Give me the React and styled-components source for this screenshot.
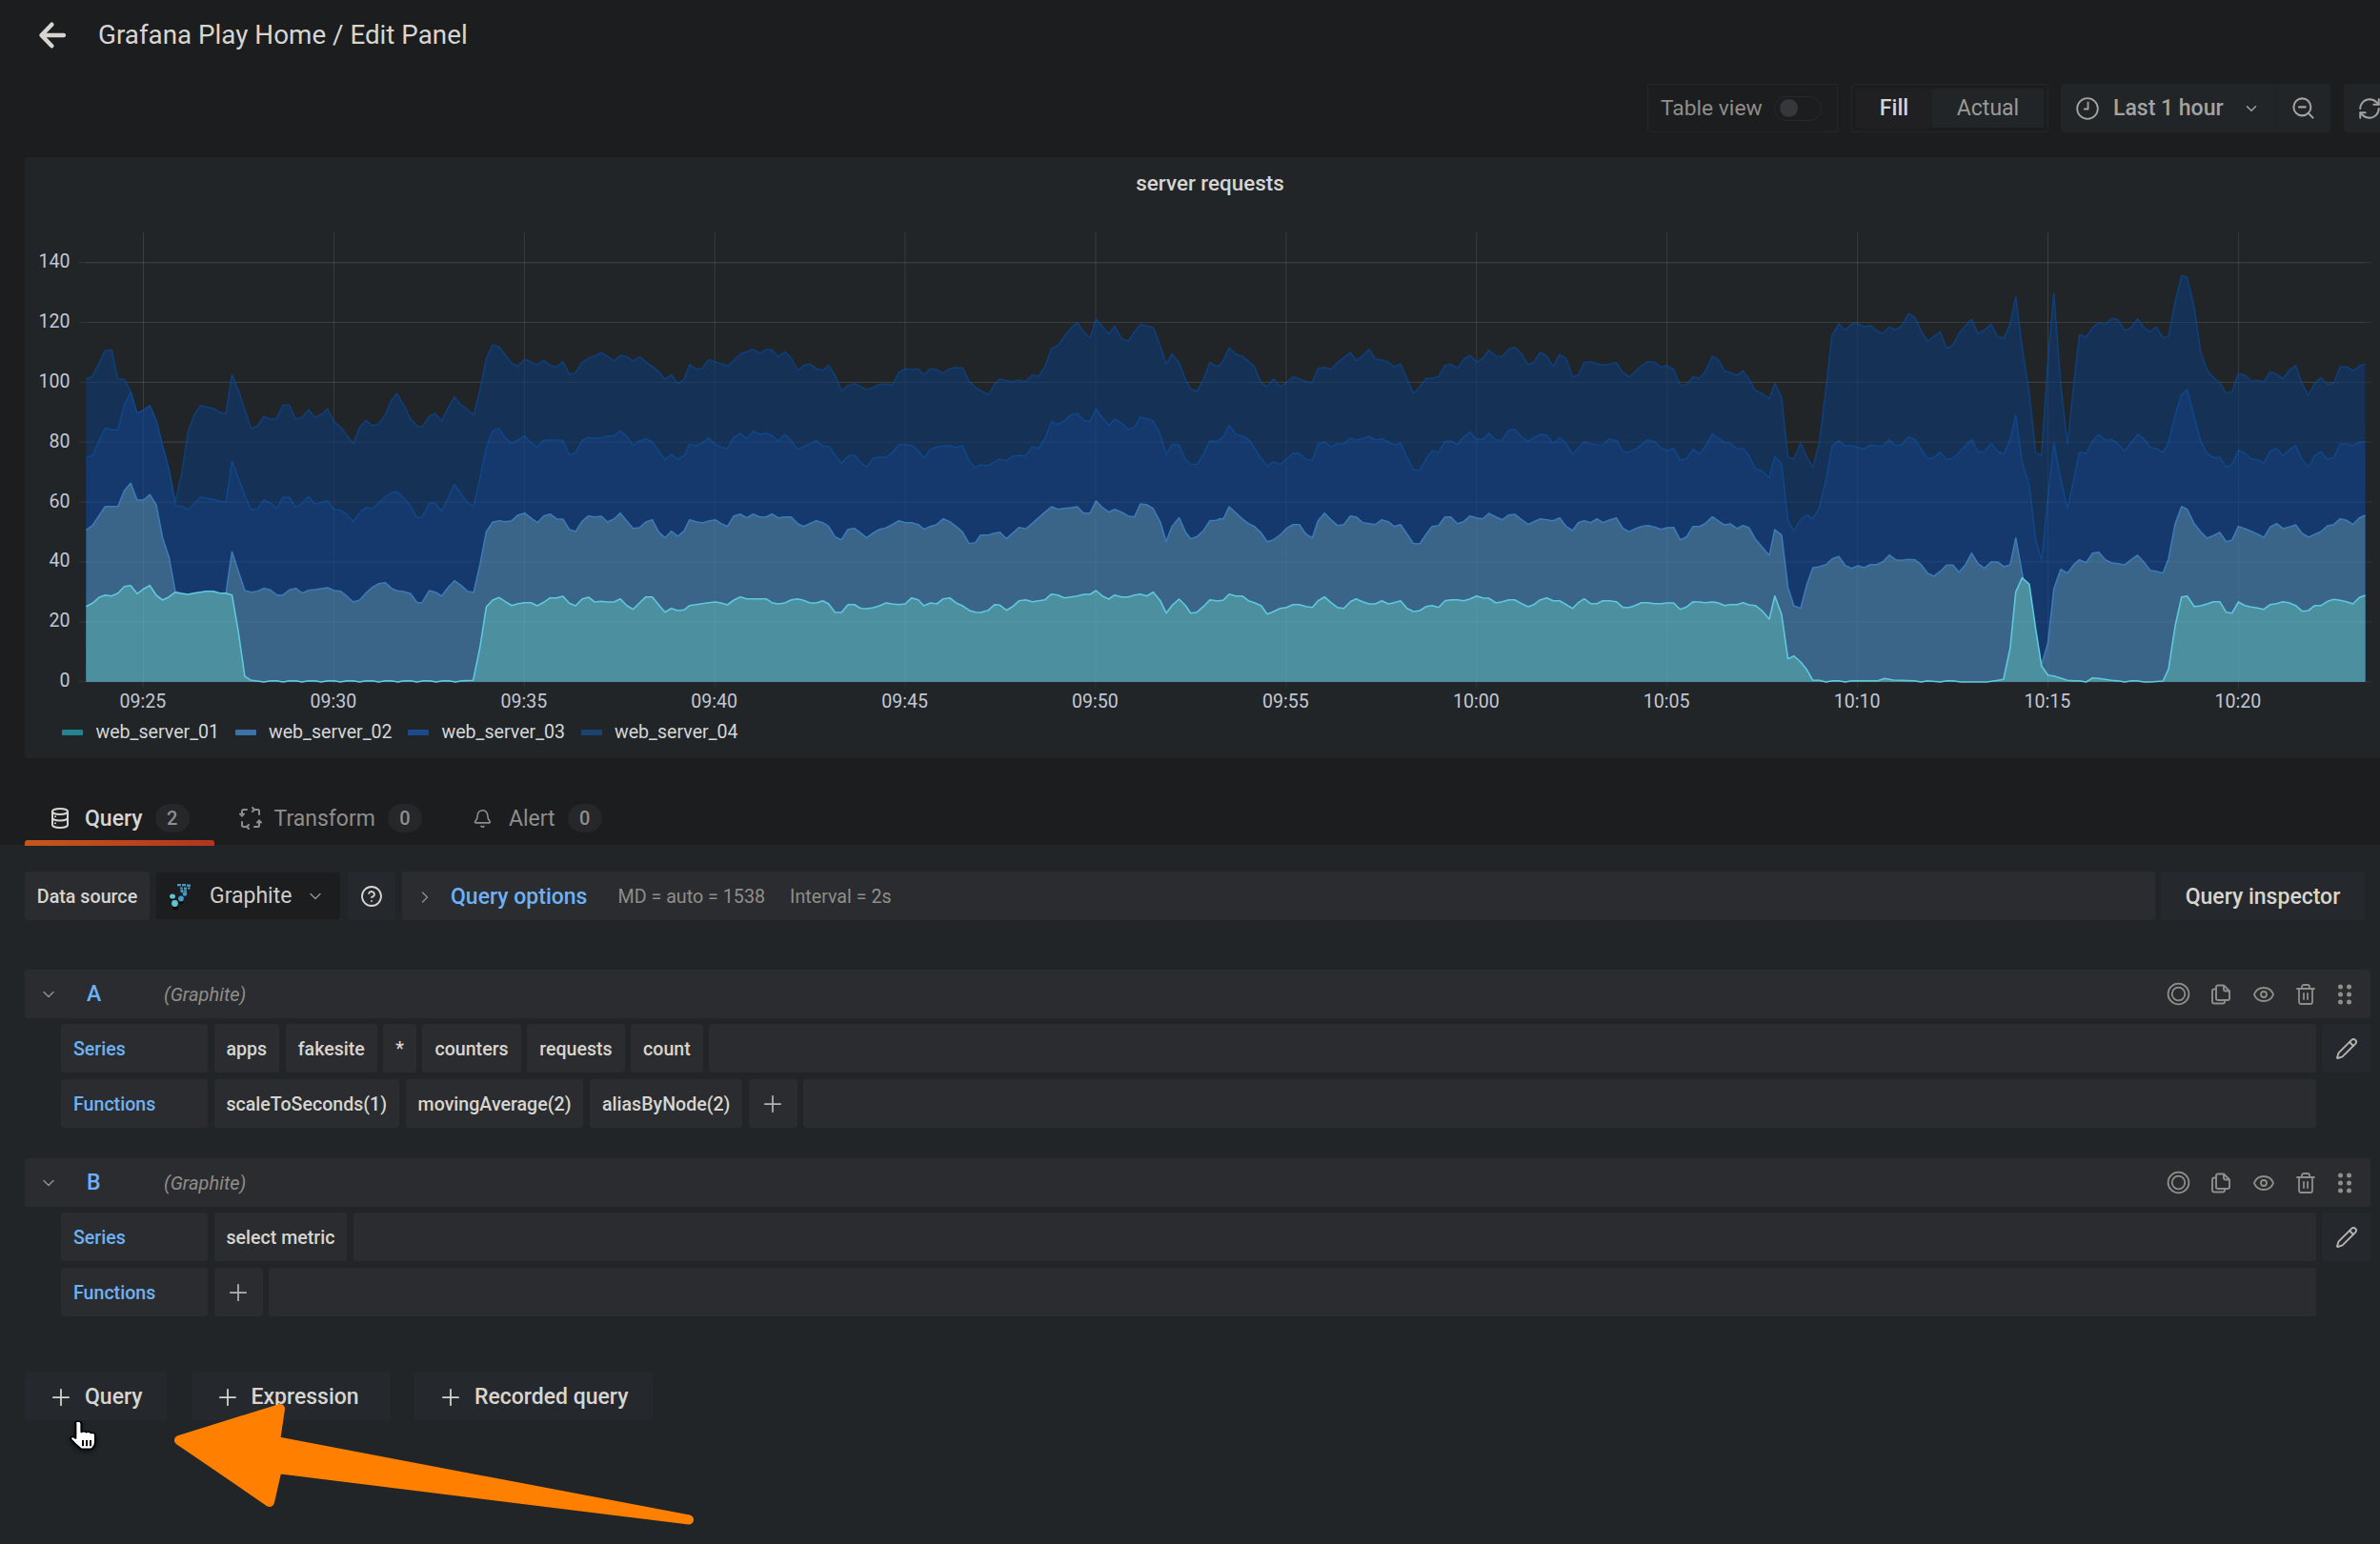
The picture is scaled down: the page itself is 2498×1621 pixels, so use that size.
import React from "react";
import styled, { createGlobalStyle } from "styled-components";
import { ChevronDown, ChevronRight, Plus, Pencil, Eye, Trash2, Bell, ZoomOut, RefreshCw, CircleHelp } from "lucide-react";

const Global = createGlobalStyle`
  html, body { margin: 0; padding: 0; background: #1c1d1f; }
  body { font-family: Roboto, "Liberation Sans", sans-serif; }
  * { box-sizing: border-box; }
`;

/* ---------- chart data: traced top edges of the four stacked series ---------- */
const trace = (ox, sx, oy, pts) =>
  pts.trim().split(/\s+/).map((p) => {
    const [a, b] = p.split(",").map(Number);
    return [ox + a / sx, oy + b / 3];
  });
const line = (a, b, c, d) => [
  ...trace(60, 2.24, 230, a),
  ...trace(750, 2.958, 250, b).slice(1),
  ...trace(1280, 2.958, 250, c).slice(1),
  ...trace(1800, 2.246, 230, d),
];

const s4 = line(
  "68,505 83,495 98,455 113,415 128,412 143,505 158,505 173,545 188,612 203,602 218,588 233,635 248,715 263,790 278,890 293,800 308,670 322,617 337,587 352,592 367,596 382,608 397,613 411,490 426,540 441,600 456,660 471,652 486,622 501,631 516,628 531,586 546,586 561,631 576,624 591,601 606,625 621,616 636,598 651,639 666,655 681,680 696,707 711,656 726,634 741,651 756,646 771,618 786,570 799,550 816,590 831,630 846,652 858,655 875,622 889,613 904,636 919,595 934,560 949,585 964,600 979,617 994,540 1009,440 1024,397 1039,402 1054,428 1069,455 1084,463 1099,442 1114,451 1129,459 1144,445 1159,461 1174,466 1189,449 1204,490 1219,484 1234,452 1249,439 1264,431 1279,421 1294,433 1309,447 1324,430 1339,433 1354,448 1369,434 1384,450 1399,465 1414,480 1429,505 1444,490 1459,520 1474,505 1487,458 1502,473 1517,470 1532,443 1547,450",
  "0,391 20,395 40,403 60,385 80,365 100,358 120,350 140,363 160,352 178,352 198,374 218,358 238,378 258,417 276,401 296,397 316,411 336,417 354,400 374,432 394,481 414,464 434,458 454,468 472,478 492,470 512,461 532,460 552,463 572,423 592,412 612,414 632,412 650,431 670,411 690,415 710,426 730,412 750,407 770,409 790,452 810,470 830,483 850,493 870,460 886,443 906,449 926,452 946,447 966,452 986,431 1006,435 1026,405 1046,348 1066,338 1086,310 1106,284 1126,266 1146,296 1166,315 1184,255 1204,278 1224,303 1242,277 1264,317 1284,325 1304,295 1322,272 1342,277 1362,282 1384,340 1402,397 1420,365 1442,392 1462,445 1478,475 1498,483 1518,445 1538,392 1558,404 1568,400",
  "0,397 12,385 30,345 50,365 70,371 90,388 108,404 130,457 148,468 168,443 188,468 208,456 228,436 248,443 268,452 288,454 306,411 326,407 346,413 366,392 386,376 406,361 424,385 444,371 464,350 484,381 504,384 524,391 542,406 562,397 582,443 602,489 622,468 642,442 660,442 680,436 700,401 718,397 738,410 758,382 778,370 798,391 818,379 836,353 858,372 878,373 898,350 916,344 938,365 958,399 976,391 996,359 1016,372 1036,404 1056,367 1076,380 1096,437 1114,431 1132,392 1152,389 1172,396 1190,400 1210,397 1232,392 1252,423 1272,438 1290,421 1310,402 1330,389 1350,391 1370,406 1390,402 1410,414 1430,463 1450,462 1470,437 1490,442 1508,421 1530,372",
  "0,438 10,447 22,478 36,483 52,492 66,478 80,503 95,541 112,550 128,566 141,518 157,562 172,750 186,755 202,705 217,750 231,782 246,705 262,530 276,367 292,330 307,350 322,330 337,330 352,340 366,335 381,352 396,360 411,340 426,349 441,337 456,298 471,310 486,352 501,385 516,370 531,356 546,407 561,398 575,360 590,337 605,316 620,361 635,350 651,331 666,370 681,375 696,330 709,245 724,405 741,550 756,735 770,745 785,450 799,233 815,520 831,710 846,520 859,364 875,372 890,342 905,326 920,333 935,313 950,317 966,352 981,342 996,314 1011,342 1026,355 1040,340 1056,374 1069,369 1085,260 1100,178 1113,184 1130,280 1145,420 1160,475 1175,500 1190,515 1205,548 1219,544 1234,487 1249,491 1264,511 1279,508 1294,513 1309,481 1324,489 1339,504 1354,476 1369,461 1384,520 1399,555 1414,516 1429,500 1444,521 1459,516 1474,466 1489,466 1504,478 1519,463 1533,457"
);
const s3 = line(
  "68,750 83,745 98,700 113,658 128,664 143,664 158,585 173,545 188,612 203,602 218,588 233,635 248,715 263,790 278,902 293,905 308,915 322,897 337,875 352,880 367,883 382,888 397,892 411,763 426,815 441,870 456,916 471,913 486,884 501,894 516,912 531,876 546,877 561,908 576,895 591,874 606,898 621,893 636,887 651,916 666,916 681,930 696,953 711,925 726,908 741,912 756,895 771,875 786,862 799,859 816,880 831,905 846,941 858,939 875,895 889,895 904,920 919,880 934,836 949,865 964,893 979,905 994,820 1009,720 1024,667 1039,660 1054,690 1069,707 1084,695 1099,683 1114,705 1129,718 1144,697 1159,695 1174,697 1189,697 1204,743 1219,735 1234,698 1249,688 1264,691 1279,689 1294,683 1309,683 1324,668 1339,684 1354,713 1369,699 1384,692 1399,702 1414,730 1429,758 1444,741 1459,757 1474,746 1487,709 1502,714 1517,706 1532,689 1547,710",
  "0,650 20,658 40,664 60,627 80,615 100,632 120,608 140,618 160,615 178,621 198,640 218,618 238,638 258,665 276,658 296,648 316,638 336,656 354,656 374,683 394,710 414,686 434,683 454,708 472,721 492,694 512,689 532,691 552,675 572,650 592,650 612,653 632,669 650,694 670,665 690,658 710,655 730,654 750,659 770,654 790,700 810,724 826,714 850,716 870,705 886,696 906,701 926,687 946,684 966,686 986,657 1006,662 1026,630 1046,578 1066,587 1086,576 1106,556 1126,553 1146,574 1166,578 1184,538 1204,566 1224,590 1242,570 1264,583 1284,603 1304,596 1322,564 1342,569 1362,576 1384,620 1402,683 1420,650 1442,651 1462,698 1478,712 1498,713 1518,680 1538,638 1558,641 1568,635",
  "0,637 12,625 30,590 50,617 70,623 90,634 108,660 130,695 148,718 168,704 188,713 208,696 228,677 248,678 268,697 288,700 306,648 326,642 346,658 366,648 386,647 406,630 424,635 444,632 464,624 484,636 504,632 524,642 542,652 562,646 582,690 602,730 622,731 642,695 660,670 680,675 700,642 718,639 738,651 758,626 778,612 798,634 818,634 836,614 858,637 878,635 898,605 916,602 938,626 958,640 976,629 996,618 1016,620 1036,647 1056,629 1076,647 1096,681 1114,661 1132,642 1152,647 1172,652 1190,651 1210,632 1232,638 1252,672 1272,674 1290,666 1310,651 1330,635 1350,641 1370,660 1390,670 1410,662 1430,700 1450,695 1470,665 1490,680 1508,656 1530,617",
  "0,683 10,692 22,704 36,706 52,725 66,722 80,745 95,786 112,794 128,815 141,748 157,770 172,950 186,982 202,947 217,932 231,943 246,910 262,820 276,716 292,698 307,715 322,713 337,720 352,724 366,712 381,715 396,714 411,696 426,714 441,710 456,686 471,694 486,725 501,755 516,751 531,734 546,758 561,753 575,736 590,714 605,694 620,734 635,731 651,707 666,731 681,740 696,695 709,618 724,765 741,840 756,1010 770,1075 785,880 799,705 815,820 831,912 846,820 859,734 875,738 890,700 905,678 920,697 935,694 950,708 966,730 981,704 996,678 1011,692 1026,719 1040,723 1056,736 1069,705 1085,615 1100,553 1113,537 1130,625 1145,700 1160,738 1175,751 1190,751 1205,781 1219,773 1234,728 1249,738 1264,755 1279,758 1294,769 1309,731 1324,722 1339,745 1354,728 1369,713 1384,758 1399,781 1414,745 1429,733 1444,758 1459,750 1474,708 1489,708 1504,714 1519,703 1533,702"
);
const s2 = line(
  "68,980 83,965 98,935 113,905 128,905 143,905 158,855 173,832 188,885 203,885 218,868 233,900 248,1005 263,1065 278,1175 293,1178 308,1182 322,1178 337,1175 352,1172 367,1172 382,1178 397,1178 411,1048 426,1110 441,1170 456,1175 471,1172 486,1163 501,1168 516,1184 531,1184 546,1168 561,1163 576,1178 591,1169 606,1167 621,1164 636,1161 651,1170 666,1172 681,1188 696,1206 711,1200 726,1178 741,1160 756,1148 771,1145 786,1163 799,1171 816,1174 831,1180 846,1208 858,1208 875,1170 889,1175 904,1187 919,1160 934,1139 949,1153 964,1172 979,1176 994,1090 1009,985 1024,955 1039,950 1054,953 1069,950 1084,932 1099,926 1114,942 1129,956 1144,935 1159,929 1174,944 1189,945 1204,978 1219,984 1234,952 1249,935 1264,938 1279,936 1294,954 1309,945 1324,926 1339,951 1354,974 1369,972 1384,954 1399,947 1414,985 1429,1004 1444,983 1459,999 1474,982 1487,947 1502,953 1517,957 1532,951 1547,947",
  "0,887 20,899 40,908 60,875 80,869 100,881 120,869 140,878 160,878 178,869 198,881 218,878 238,878 258,899 276,908 296,899 316,890 336,896 354,908 374,941 394,950 414,917 434,914 454,929 472,944 492,929 512,917 532,913 552,902 572,890 592,896 612,896 632,902 650,917 670,908 690,902 710,884 730,893 750,908 770,926 790,962 810,959 826,935 850,935 870,929 886,926 906,947 926,929 946,911 966,916 986,899 1006,881 1026,863 1046,846 1066,854 1086,851 1106,849 1126,846 1146,866 1166,866 1184,828 1204,848 1224,863 1242,854 1264,863 1284,875 1304,878 1322,837 1342,840 1362,852 1384,895 1402,956 1420,908 1442,881 1462,926 1478,947 1498,940 1518,921 1538,890 1558,889 1568,884",
  "0,887 12,884 30,846 50,865 70,884 90,899 108,908 130,929 148,956 168,950 188,935 208,914 228,902 248,902 268,932 288,944 306,890 326,866 346,887 366,905 386,902 406,875 424,878 444,896 464,899 484,902 504,887 524,893 542,908 562,902 582,932 602,962 622,962 642,932 660,908 680,905 700,878 718,878 738,899 758,893 778,875 798,881 818,884 836,867 858,878 878,887 898,872 916,870 938,887 958,902 976,893 996,884 1016,887 1036,890 1056,881 1076,908 1096,921 1114,896 1132,890 1152,896 1172,884 1190,896 1210,888 1232,881 1252,914 1272,925 1290,916 1310,908 1330,905 1350,910 1370,917 1390,912 1410,911 1430,950 1450,941 1470,908 1490,908 1508,899 1530,878",
  "0,943 10,953 22,963 36,960 52,975 66,965 80,972 95,1008 112,1034 128,1060 141,978 157,995 172,1160 186,1218 202,1226 217,1150 231,1098 246,1095 262,1088 276,1070 292,1063 307,1091 322,1100 337,1092 352,1098 366,1088 381,1088 396,1079 411,1058 426,1073 441,1075 456,1072 471,1073 486,1088 501,1115 516,1125 531,1110 546,1090 561,1090 575,1112 590,1090 605,1052 620,1085 635,1100 651,1080 666,1080 681,1095 696,1089 709,1005 724,1115 741,1245 756,1330 770,1405 785,1335 799,1165 815,1103 831,1115 846,1088 859,1073 875,1082 890,1052 905,1049 920,1073 935,1083 950,1085 966,1089 981,1073 996,1059 1011,1080 1026,1106 1040,1109 1056,1115 1069,1070 1085,960 1100,905 1113,914 1130,960 1145,985 1160,1005 1175,997 1190,987 1205,1016 1219,1011 1234,968 1249,975 1264,983 1279,992 1294,1003 1309,970 1324,959 1339,975 1354,970 1369,963 1384,990 1399,1002 1414,993 1429,984 1444,966 1459,962 1474,944 1489,949 1504,962 1519,941 1533,933"
);
const s1 = line(
  "68,1220 83,1210 98,1192 113,1184 128,1187 143,1178 158,1157 173,1154 188,1180 203,1165 218,1154 233,1185 248,1200 263,1190 278,1175 293,1180 308,1182 322,1178 337,1175 352,1172 367,1172 382,1178 397,1178 411,1184 426,1300 441,1440 456,1453 471,1455 486,1458 501,1454 516,1454 531,1458 546,1454 561,1454 576,1458 591,1454 606,1454 621,1458 636,1454 651,1454 666,1458 681,1454 696,1454 711,1458 726,1454 741,1454 756,1458 771,1454 786,1454 801,1458 816,1454 831,1454 846,1458 861,1454 876,1454 891,1458 906,1454 921,1454 936,1458 951,1454 978,1453 994,1350 1009,1222 1024,1200 1039,1192 1054,1205 1069,1217 1084,1211 1099,1208 1114,1208 1129,1218 1144,1207 1159,1193 1174,1193 1189,1188 1204,1210 1219,1218 1234,1197 1249,1191 1264,1206 1279,1204 1294,1206 1309,1206 1324,1196 1339,1217 1354,1229 1369,1209 1384,1190 1399,1190 1414,1214 1429,1238 1444,1226 1459,1233 1474,1231 1487,1217 1502,1214 1517,1211 1532,1208 1547,1206",
  "0,1145 20,1149 40,1155 60,1140 80,1130 100,1136 120,1136 140,1136 160,1136 178,1148 198,1152 218,1149 238,1139 258,1136 276,1141 296,1149 316,1149 336,1142 354,1152 374,1178 394,1179 414,1154 434,1154 454,1166 472,1167 492,1164 512,1158 532,1149 552,1152 572,1154 592,1152 612,1133 632,1139 650,1158 670,1149 690,1152 710,1136 730,1133 750,1149 770,1158 790,1172 810,1178 826,1179 850,1172 870,1154 886,1156 906,1172 926,1160 946,1142 966,1139 986,1145 1006,1142 1026,1139 1046,1121 1066,1124 1086,1133 1106,1130 1126,1127 1146,1122 1166,1122 1184,1110 1204,1127 1224,1137 1242,1124 1264,1130 1284,1130 1304,1124 1322,1121 1342,1127 1362,1115 1384,1142 1402,1181 1420,1157 1442,1137 1462,1157 1478,1181 1498,1178 1518,1160 1538,1139 1558,1142 1568,1142",
  "0,1140 12,1140 30,1121 50,1127 70,1127 90,1142 108,1148 130,1158 148,1184 168,1176 188,1166 208,1163 228,1154 248,1154 268,1160 288,1163 306,1142 326,1130 346,1148 366,1163 386,1166 406,1145 424,1136 444,1145 464,1152 484,1152 504,1142 524,1152 542,1148 562,1142 582,1166 602,1176 622,1173 642,1160 660,1157 680,1163 700,1142 718,1139 738,1139 758,1142 778,1136 798,1127 818,1133 836,1134 858,1149 878,1145 898,1139 916,1139 938,1151 958,1161 976,1154 996,1139 1016,1133 1036,1142 1056,1142 1076,1154 1096,1166 1114,1148 1132,1136 1152,1151 1172,1151 1190,1142 1210,1142 1232,1145 1252,1163 1272,1163 1290,1157 1310,1148 1330,1148 1350,1151 1370,1151 1390,1149 1410,1149 1430,1169 1450,1162 1470,1145 1490,1146 1508,1148 1530,1146",
  "0,1207 10,1210 22,1217 36,1214 52,1214 66,1208 80,1215 95,1217 112,1235 128,1260 141,1187 157,1245 172,1385 186,1376 202,1395 217,1420 231,1453 246,1453 262,1458 276,1454 292,1454 307,1458 322,1454 340,1454 384,1454 400,1447 420,1452 470,1454 486,1458 501,1454 531,1458 546,1454 561,1454 580,1458 640,1458 660,1454 680,1450 696,1350 709,1175 724,1130 741,1150 756,1290 770,1408 785,1436 799,1439 815,1446 831,1453 846,1454 859,1454 875,1458 890,1445 905,1447 935,1453 950,1454 966,1458 981,1454 996,1454 1011,1458 1026,1458 1056,1455 1069,1418 1085,1280 1100,1190 1113,1187 1130,1220 1145,1218 1160,1212 1175,1205 1190,1205 1205,1238 1219,1241 1234,1206 1249,1217 1264,1222 1279,1225 1294,1229 1309,1214 1324,1211 1339,1205 1354,1209 1369,1217 1384,1235 1399,1233 1414,1217 1429,1217 1444,1204 1459,1198 1474,1201 1489,1205 1504,1212 1519,1192 1533,1185"
);

const BASE = 715.7;
const STEP = 62.87;
const CHART_SERIES = [
  { pts: s4, fill: "#153155", stroke: "#0f3f7a" },
  { pts: s3, fill: "#15396c", stroke: "#0f4788" },
  { pts: s2, fill: "#3a6488", stroke: "#3d7ab8" },
  { pts: s1, fill: "#4c909f", stroke: "#5fc8de" },
];
const TICKS_X = ["09:25", "09:30", "09:35", "09:40", "09:45", "09:50", "09:55", "10:00", "10:05", "10:10", "10:15", "10:20"];
const TICKS_Y = [0, 20, 40, 60, 80, 100, 120, 140];
const LEGEND = [
  { name: "web_server_01", color: "#23838f" },
  { name: "web_server_02", color: "#3c72a8" },
  { name: "web_server_03", color: "#1d4a8e" },
  { name: "web_server_04", color: "#1c4270" },
];

const toStr = (pts) => pts.map(([x, y]) => `${x.toFixed(1)},${y.toFixed(1)}`).join(" ");

const Chart = () => (
  <ChartSvg viewBox="26 244 2472 506" width="2472" height="506">
    {TICKS_X.map((_, i) => (
      <line key={i} x1={150.5 + i * 199.9} x2={150.5 + i * 199.9} y1="244" y2="722" stroke="rgba(255,255,255,.07)" strokeWidth="1" />
    ))}
    {TICKS_Y.map((v, i) => (
      <line key={v} x1="83" x2="2489" y1={BASE - i * STEP} y2={BASE - i * STEP} stroke="rgba(255,255,255,.07)" strokeWidth="1.2" />
    ))}
    {CHART_SERIES.map((s, i) => {
      const first = s.pts[0][0];
      const last = s.pts[s.pts.length - 1][0];
      return (
        <g key={i}>
          <polygon points={`${first},${BASE} ${toStr(s.pts)} ${last},${BASE}`} fill={s.fill} />
          <polyline points={toStr(s.pts)} fill="none" stroke={s.stroke} strokeWidth="1.6" strokeLinejoin="round" />
        </g>
      );
    })}
    {TICKS_X.map((_, i) => (
      <line key={i} x1={150.5 + i * 199.9} x2={150.5 + i * 199.9} y1="244" y2={BASE} stroke="rgba(255,255,255,.05)" strokeWidth="1" />
    ))}
    {TICKS_Y.map((v, i) => (
      <line key={v} x1="90" x2="2482" y1={BASE - i * STEP} y2={BASE - i * STEP} stroke="rgba(255,255,255,.05)" strokeWidth="1.2" />
    ))}
    {TICKS_Y.map((v, i) => (
      <AxisText key={v} x="73.5" y={BASE - i * STEP + 5.5} textAnchor="end">{v}</AxisText>
    ))}
    {TICKS_X.map((t, i) => (
      <AxisText key={t} x={150 + i * 199.9} y="743" textAnchor="middle">{t}</AxisText>
    ))}
  </ChartSvg>
);

/* ---------- small drawn icons ---------- */
const Svg = ({ size = 24, w, h, children, ...rest }) => (
  <svg width={w || size} height={h || size} viewBox="0 0 24 24" fill="none" stroke="currentColor" strokeLinecap="round" strokeLinejoin="round" {...rest}>{children}</svg>
);
const ArrowBack = () => (
  <Svg w={30} h={30} strokeWidth="3.6"><path d="M21.5 12H3.5M11.5 3 2.8 12l8.7 9" /></Svg>
);
const DbIcon = () => (
  <Svg size={24} strokeWidth="2">
    <ellipse cx="12" cy="5" rx="8" ry="3" />
    <path d="M4 5v14c0 1.7 3.6 3 8 3s8-1.300 8-3V5M4 11.500c0 1.700 3.600 3 8 3s8-1.300 8-3" />
    <path d="M7 10.200h.01M7 17.200h.01" />
  </Svg>
);
const TransformIcon = () => (
  <Svg size={24} strokeWidth="2">
    <path d="M3 9.500V4.500C3 3.700 3.700 3 4.500 3H8M16 3h3.500c.8 0 1.500.7 1.500 1.500V8M21 14.500v5c0 .8-.7 1.500-1.500 1.500H16M8 21H4.500C3.700 21 3 20.300 3 19.500V16" />
    <path d="M1 7.500 3 9.500 5 7.500M14 1l2 2-2 2M23 16.500l-2-2-2 2M10 23l-2-2 2-2" />
  </Svg>
);
const ClockIcon = () => (
  <Svg size={26} strokeWidth="1.700"><circle cx="12" cy="12" r="10" /><path d="M12.500 6v6.500H9" /></Svg>
);
const TargetIcon = () => (
  <Svg size={25} strokeWidth="1.700"><circle cx="12" cy="12" r="10.500" /><circle cx="12" cy="12" r="6.500" /></Svg>
);
const CopyIcon = () => (
  <Svg size={24} strokeWidth="1.900">
    <path d="M9 2.500h6l6 6V16a2 2 0 0 1-2 2H9a2 2 0 0 1-2-2V4.500a2 2 0 0 1 2-2zM15 2.500v4a2 2 0 0 0 2 2h4" />
    <path d="M7 6.500H5a2 2 0 0 0-2 2V19.500a2 2 0 0 0 2 2h9a2 2 0 0 0 2-2V18" />
  </Svg>
);
const DotsIcon = () => (
  <svg width="16" height="24" viewBox="0 0 16 24" fill="currentColor">
    <circle cx="3.500" cy="4" r="2.500" /><circle cx="12.500" cy="4" r="2.500" />
    <circle cx="3.500" cy="12" r="2.500" /><circle cx="12.500" cy="12" r="2.500" />
    <circle cx="3.500" cy="20" r="2.500" /><circle cx="12.500" cy="20" r="2.500" />
  </svg>
);
const GraphiteLogo = () => (
  <svg width="30" height="30" viewBox="0 0 30 30">
    <g fill="#0b0c0d">
      <ellipse cx="8" cy="26" rx="3" ry="3.600" /><ellipse cx="13.500" cy="20" rx="3" ry="3.400" /><ellipse cx="4" cy="16" rx="2.500" ry="3" />
    </g>
    <g fill="#5fc4cf">
      <ellipse cx="7.500" cy="22.500" rx="3.400" ry="3.400" /><ellipse cx="5" cy="15" rx="3" ry="2.600" />
    </g>
    <g fill="#3e9ec9">
      <circle cx="14" cy="17.500" r="2.900" /><circle cx="18" cy="12.500" r="2.300" /><circle cx="15" cy="9.500" r="1.700" />
      <rect x="10" y="2" width="4" height="2.300" /><rect x="15" y="2" width="4" height="2.300" /><rect x="20" y="2.500" width="4" height="2.300" />
      <rect x="13" y="5.500" width="3" height="2" /><rect x="17" y="5.500" width="3" height="2.500" /><rect x="21" y="5.500" width="2.500" height="2" />
      <rect x="17" y="8.500" width="3" height="2" />
    </g>
  </svg>
);
const HandCursor = () => (
  <svg width="40" height="34" viewBox="0 0 20 24" preserveAspectRatio="none">
    <path d="M6 1.500c1 0 1.700.8 1.700 1.800v6.200c.5-.6 2-.7 2.600.2.700-.5 2.100-.3 2.500.6.800-.4 2.200 0 2.200 1.200v5c0 2.500-1 4.300-2 5.500H7.500c-1-1.500-2.500-3-4-5.200-.7-1-2-2.500-1.200-3.400.6-.7 1.600-.2 2.400.8V3.300C4.300 2.300 5 1.500 6 1.500z" fill="#fff" stroke="#000" strokeWidth="1" strokeLinejoin="round" />
    <path d="M8.500 15.500v4.500M10.500 15.500v4.500M12.500 15.500v4.500" stroke="#000" strokeWidth="1" />
  </svg>
);

/* ---------- styled parts ---------- */
const Page = styled.div`
  position: relative;
  width: 2498px;
  height: 1621px;
  overflow: hidden;
  background: #1c1d1f;
  color: #d8d5d0;
`;
const TitleBar = styled.header`
  height: 88px;
  padding: 22px 0 0 40px;
  display: flex;
  align-items: flex-start;
  gap: 33px;
  color: #d8d5d0;
`;
const PageTitle = styled.h1`
  margin: 0;
  font-size: 27.8px;
  line-height: 30px;
  font-weight: 400;
  white-space: nowrap;
`;
const Toolbar = styled.div`
  height: 51px;
  display: flex;
  justify-content: flex-end;
  margin-right: -12px;
`;
const ViewToggle = styled.div`
  width: 200px;
  border: 1px solid #25272a;
  border-radius: 3px;
  display: flex;
  align-items: center;
  padding-left: 13px;
  gap: 12px;
  font-size: 22.8px;
  color: #8f8e8b;
  margin-right: 14px;
`;
const Switch = styled.span`
  width: 50px;
  height: 26px;
  border: 1px solid #26282b;
  border-radius: 13px;
  display: flex;
  align-items: center;
  padding-left: 5px;
`;
const Knob = styled.span`
  width: 19px;
  height: 19px;
  border-radius: 50%;
  background: #36373b;
`;
const FillGroup = styled.div`
  width: 207px;
  border: 1px solid #25272a;
  border-radius: 3px;
  padding: 4px;
  display: flex;
  margin-right: 13px;
`;
const FillOption = styled.span`
  flex: ${(p) => (p.$active ? "0 0 80px" : "1")};
  display: flex;
  align-items: center;
  justify-content: center;
  font-size: 23px;
  font-weight: ${(p) => (p.$active ? 500 : 400)};
  color: ${(p) => (p.$active ? "#d8d5d0" : "#9a9996")};
  background: ${(p) => (p.$active ? "#202023" : "#212528")};
  border-radius: 2px;
`;
const TimeBox = styled.div`
  width: 283px;
  background: #212528;
  border-radius: 3px;
  display: flex;
  align-items: center;
  color: #a5a3a0;
  margin-right: 14px;
`;
const TimeMain = styled.div`
  width: 226px;
  height: 100%;
  display: flex;
  align-items: center;
  padding-left: 15px;
  gap: 14px;
  font-size: 23px;
  font-weight: 500;
  white-space: nowrap;
  border-right: 1px solid #1f2125;
`;
const TimeChevron = styled(ChevronDown)`
  margin-left: 6px;
`;
const ZoomBox = styled.div`
  flex: 1;
  display: flex;
  justify-content: center;
`;
const RefreshBox = styled.div`
  width: 50px;
  background: #212528;
  border-radius: 3px 0 0 3px;
  display: flex;
  align-items: center;
  padding-left: 14px;
  color: #a5a3a0;
`;
const PanelCard = styled.section`
  margin: 26px 0 0 26px;
  height: 631px;
  background: #212528;
  border-radius: 3px 0 0 3px;
  display: flex;
  flex-direction: column;
`;
const PanelTitle = styled.div`
  height: 79px;
  padding: 14px 0 0 16px;
  text-align: center;
  font-size: 22.4px;
  line-height: 26px;
  font-weight: 500;
  color: #d8d5d0;
`;
const ChartSvg = styled.svg`
  display: block;
`;
const AxisText = styled.text`
  font-family: Roboto, sans-serif;
  font-size: 19.6px;
  fill: #c3c7d4;
`;
const Legend = styled.div`
  display: flex;
  align-items: center;
  padding: 6px 0 0 39px;
`;
const LegendItem = styled.div`
  display: flex;
  align-items: center;
  width: 181.500px;
  gap: 13.500px;
  font-size: 19.6px;
  line-height: 26px;
  color: #d5d6d6;
`;
const Swatch = styled.i`
  width: 22px;
  height: 6.500px;
  border-radius: 1px;
  background: ${(p) => p.$color};
`;
const TabBar = styled.nav`
  height: 92px;
  display: flex;
  align-items: flex-end;
  padding-left: 26px;
  border-bottom: 1px solid #25282b;
`;
const Tab = styled.div`
  position: relative;
  display: flex;
  align-items: center;
  height: 44px;
  padding: 0 26px 12px ${(p) => p.$pad}px;
  font-size: 23px;
  font-weight: ${(p) => (p.$active ? 500 : 400)};
  color: ${(p) => (p.$active ? "#d8d5d0" : "#8f8e8b")};
  &::after {
    content: "";
    display: ${(p) => (p.$active ? "block" : "none")};
    position: absolute;
    left: 0;
    right: 0;
    bottom: -1px;
    height: 6px;
    border-radius: 3px 3px 0 0;
    background: linear-gradient(90deg, #c4571a, #b3341f);
  }
`;
const TabLabel = styled.span`
  margin: 0 13px 0 ${(p) => p.$gap}px;
`;
const TabBadge = styled.span`
  width: 36px;
  height: 30px;
  border-radius: 15px;
  background: #25272a;
  display: flex;
  align-items: center;
  justify-content: center;
  font-size: 20px;
  font-weight: 500;
  color: #8f8e8b;
`;
const Editor = styled.main`
  background: #212528;
  height: 733px;
  padding: 27px 10px 0 26px;
`;
const QueryBar = styled.div`
  height: 51px;
  display: flex;
  gap: 7px;
  margin-right: 6px;
`;
const Box = styled.div`
  display: flex;
  align-items: center;
  height: 100%;
  border-radius: 3px;
  background: #2a2c2f;
`;
const SourceLabel = styled(Box)`
  width: 131px;
  justify-content: center;
  padding-top: 2px;
  font-size: 19.7px;
  font-weight: 500;
  color: #d8d5d0;
`;
const SourceSelect = styled(Box)`
  width: 193px;
  height: 49px;
  margin-top: 1px;
  background: #1c1d1f;
  padding-left: 12px;
  font-size: 23px;
  color: #cfccc8;
`;
const SourceName = styled.span`
  margin-left: 14px;
`;
const SourceChevron = styled(ChevronDown)`
  margin-left: 15px;
  color: #8f8e8b;
`;
const HelpBox = styled(Box)`
  width: 50px;
  margin-left: 1px;
  justify-content: center;
  background: #25292d;
`;
const OptionsBox = styled(Box)`
  flex: 1;
  padding: 2px 0 0 14px;
`;
const OptionsLink = styled.span`
  font-size: 23px;
  font-weight: 500;
  color: #6db2f5;
  margin: 0 32px 0 17px;
`;
const OptionsMeta = styled.span`
  font-size: 19.7px;
  color: #8f8e8b;
  margin-right: 26px;
`;
const InspectorButton = styled(Box)`
  width: 214px;
  margin-left: -1px;
  padding-top: 2px;
  justify-content: center;
  background: #25292d;
  font-size: 23px;
  font-weight: 500;
  color: #d8d5d0;
`;
const QueryCard = styled.section`
  margin-top: ${(p) => p.$top}px;
`;
const QueryHead = styled(Box)`
  height: 51px;
  padding-left: 15px;
  color: #8f8e8b;
`;
const QueryLetter = styled.span`
  width: 81px;
  margin-left: 30px;
  font-size: 23px;
  font-weight: 500;
  color: #6db2f5;
`;
const QuerySource = styled.span`
  font-size: 20px;
  font-style: italic;
  color: #8f8e8b;
`;
const HeadActions = styled.div`
  margin-left: auto;
  padding-right: 19px;
  display: flex;
  align-items: center;
  gap: 20.6px;
  color: #8f8e8b;
`;
const Rows = styled.div`
  margin-top: 6px;
  padding-left: 38px;
  display: flex;
  flex-direction: column;
  gap: 7px;
`;
const Row = styled.div`
  height: 51px;
  display: flex;
  gap: 6.500px;
`;
const RowLabel = styled(Box)`
  width: 154px;
  padding: 2px 0 0 13px;
  font-size: 19.6px;
  font-weight: 500;
  color: #6db2f5;
`;
const Segment = styled(Box)`
  padding: 2px 13px 0;
  font-size: 19.6px;
  font-weight: 500;
  color: #d8d5d0;
  white-space: nowrap;
`;
const AddSegment = styled(Box)`
  width: 51px;
  justify-content: center;
  color: #b5b3af;
`;
const Filler = styled(Box)`
  flex: 1;
  margin-right: ${(p) => (p.$gapped ? 0 : 57)}px;
`;
const PencilBox = styled(Box)`
  width: 51px;
  justify-content: center;
  background: #25292d;
  color: #b5b3af;
`;
const AddRow = styled.div`
  margin-top: 58px;
  height: 51px;
  display: flex;
  gap: 25.500px;
`;
const AddButton = styled(Box)`
  width: ${(p) => p.$w}px;
  padding: 2px 0 0 24px;
  gap: 11px;
  background: #25292d;
  font-size: 23px;
  font-weight: 500;
  color: #d8d5d0;
`;
const Annotation = styled.svg`
  position: absolute;
  left: 170px;
  top: 1460px;
`;
const CursorSpot = styled.div`
  position: absolute;
  left: 70px;
  top: 1490px;
  filter: drop-shadow(0 2px 2px rgba(0,0,0,.6));
`;

const QueryRows = ({ series, functions }) => (
  <Rows>
    <Row>
      <RowLabel>Series</RowLabel>
      {series.map((s) => <Segment key={s}>{s}</Segment>)}
      <Filler $gapped />
      <PencilBox><Pencil size={24} strokeWidth={1.9} /></PencilBox>
    </Row>
    <Row>
      <RowLabel>Functions</RowLabel>
      {functions.map((s) => <Segment key={s}>{s}</Segment>)}
      <AddSegment><Plus size={28} strokeWidth={1.5} /></AddSegment>
      <Filler />
    </Row>
  </Rows>
);

const QueryHeader = ({ letter }) => (
  <QueryHead>
    <ChevronDown size={20} strokeWidth={1.8} />
    <QueryLetter>{letter}</QueryLetter>
    <QuerySource>(Graphite)</QuerySource>
    <HeadActions>
      <TargetIcon />
      <CopyIcon />
      <Eye size={24} strokeWidth={1.8} />
      <Trash2 size={24} strokeWidth={1.8} />
      <DotsIcon />
    </HeadActions>
  </QueryHead>
);

export default function App() {
  return (
    <Page>
      <Global />
      <TitleBar>
        <ArrowBack />
        <PageTitle>Grafana Play Home / Edit Panel</PageTitle>
      </TitleBar>
      <Toolbar>
        <ViewToggle>Table view<Switch><Knob /></Switch></ViewToggle>
        <FillGroup>
          <FillOption $active>Fill</FillOption>
          <FillOption>Actual</FillOption>
        </FillGroup>
        <TimeBox>
          <TimeMain>
            <ClockIcon />
            Last 1 hour
            <TimeChevron size={18} strokeWidth={2} />
          </TimeMain>
          <ZoomBox><ZoomOut size={27} strokeWidth={1.8} /></ZoomBox>
        </TimeBox>
        <RefreshBox><RefreshCw size={26} strokeWidth={1.8} /></RefreshBox>
      </Toolbar>
      <PanelCard>
        <PanelTitle>server requests</PanelTitle>
        <Chart />
        <Legend>
          {LEGEND.map((l) => (
            <LegendItem key={l.name}><Swatch $color={l.color} />{l.name}</LegendItem>
          ))}
        </Legend>
      </PanelCard>
      <TabBar>
        <Tab $active $pad={25}><DbIcon /><TabLabel $gap={14}>Query</TabLabel><TabBadge>2</TabBadge></Tab>
        <Tab $pad={26}><TransformIcon /><TabLabel $gap={13}>Transform</TabLabel><TabBadge>0</TabBadge></Tab>
        <Tab $pad={27}><Bell size={21} strokeWidth={1.8} /><TabLabel $gap={17}>Alert</TabLabel><TabBadge>0</TabBadge></Tab>
      </TabBar>
      <Editor>
        <QueryBar>
          <SourceLabel>Data source</SourceLabel>
          <SourceSelect>
            <GraphiteLogo />
            <SourceName>Graphite</SourceName>
            <SourceChevron size={20} strokeWidth={1.8} />
          </SourceSelect>
          <HelpBox><CircleHelp size={24} strokeWidth={1.8} /></HelpBox>
          <OptionsBox>
            <ChevronRight size={20} strokeWidth={1.6} color="#8f8e8b" />
            <OptionsLink>Query options</OptionsLink>
            <OptionsMeta>MD = auto = 1538</OptionsMeta>
            <OptionsMeta>Interval = 2s</OptionsMeta>
          </OptionsBox>
          <InspectorButton>Query inspector</InspectorButton>
        </QueryBar>
        <QueryCard $top={52}>
          <QueryHeader letter="A" />
          <QueryRows
            series={["apps", "fakesite", "*", "counters", "requests", "count"]}
            functions={["scaleToSeconds(1)", "movingAverage(2)", "aliasByNode(2)"]}
          />
        </QueryCard>
        <QueryCard $top={32}>
          <QueryHeader letter="B" />
          <QueryRows series={["select metric"]} functions={[]} />
        </QueryCard>
        <AddRow>
          <AddButton $w={149}><Plus size={28} strokeWidth={1.5} />Query</AddButton>
          <AddButton $w={209}><Plus size={28} strokeWidth={1.5} />Expression</AddButton>
          <AddButton $w={250}><Plus size={28} strokeWidth={1.5} />Recorded query</AddButton>
        </AddRow>
      </Editor>
      <CursorSpot><HandCursor /></CursorSpot>
      <Annotation width="570" height="150" viewBox="170 1460 570 150">
        <polygon points="188,1512 294,1479 289,1513 723,1595.500 291,1542 283,1577" fill="#ff8000" stroke="#ff8000" strokeWidth="10" strokeLinejoin="round" />
      </Annotation>
    </Page>
  );
}
